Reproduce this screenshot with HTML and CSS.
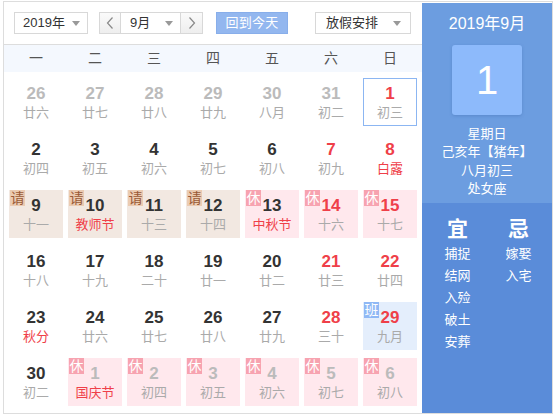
FILE: index.html
```html
<!DOCTYPE html>
<html lang="zh-CN">
<head>
<meta charset="utf-8">
<title>万年历</title>
<link rel="stylesheet" href="styles.css">
</head>
<body>
<div class="cal">
  <div class="main">
    <div class="toolbar">
      <div class="sel sel-year"><span>2019年</span><i class="caret"></i></div>
      <div class="month-ctl">
        <div class="nav"><svg width="8" height="12" viewBox="0 0 8 12"><polyline points="6.5,0.5 1.5,6 6.5,11.5" fill="none" stroke="#888" stroke-width="1.2"/></svg></div>
        <div class="sel sel-month"><span>9月</span><i class="caret"></i></div>
        <div class="nav"><svg width="8" height="12" viewBox="0 0 8 12"><polyline points="1.5,0.5 6.5,6 1.5,11.5" fill="none" stroke="#888" stroke-width="1.2"/></svg></div>
      </div>
      <div class="btn-today">回到今天</div>
      <div class="sel sel-holiday"><span>放假安排</span><i class="caret"></i></div>
    </div>
    <div class="week">
      <span>一</span><span>二</span><span>三</span><span>四</span><span>五</span><span>六</span><span>日</span>
    </div>
    <div class="grid">
      <div class="day other"><b>26</b><em>廿六</em></div>
      <div class="day other"><b>27</b><em>廿七</em></div>
      <div class="day other"><b>28</b><em>廿八</em></div>
      <div class="day other"><b>29</b><em>廿九</em></div>
      <div class="day other"><b>30</b><em>八月</em></div>
      <div class="day other"><b>31</b><em>初二</em></div>
      <div class="day red selected"><b>1</b><em>初三</em></div>

      <div class="day"><b>2</b><em>初四</em></div>
      <div class="day"><b>3</b><em>初五</em></div>
      <div class="day"><b>4</b><em>初六</em></div>
      <div class="day"><b>5</b><em>初七</em></div>
      <div class="day"><b>6</b><em>初八</em></div>
      <div class="day red"><b>7</b><em>初九</em></div>
      <div class="day red"><b>8</b><em class="fest">白露</em></div>

      <div class="day leave"><i class="tag">请</i><b>9</b><em>十一</em></div>
      <div class="day leave"><i class="tag">请</i><b>10</b><em class="fest">教师节</em></div>
      <div class="day leave"><i class="tag">请</i><b>11</b><em>十三</em></div>
      <div class="day leave"><i class="tag">请</i><b>12</b><em>十四</em></div>
      <div class="day rest"><i class="tag">休</i><b>13</b><em class="fest">中秋节</em></div>
      <div class="day rest red"><i class="tag">休</i><b>14</b><em>十六</em></div>
      <div class="day rest red"><i class="tag">休</i><b>15</b><em>十七</em></div>

      <div class="day"><b>16</b><em>十八</em></div>
      <div class="day"><b>17</b><em>十九</em></div>
      <div class="day"><b>18</b><em>二十</em></div>
      <div class="day"><b>19</b><em>廿一</em></div>
      <div class="day"><b>20</b><em>廿二</em></div>
      <div class="day red"><b>21</b><em>廿三</em></div>
      <div class="day red"><b>22</b><em>廿四</em></div>

      <div class="day"><b>23</b><em class="fest">秋分</em></div>
      <div class="day"><b>24</b><em>廿六</em></div>
      <div class="day"><b>25</b><em>廿七</em></div>
      <div class="day"><b>26</b><em>廿八</em></div>
      <div class="day"><b>27</b><em>廿九</em></div>
      <div class="day red"><b>28</b><em>三十</em></div>
      <div class="day work red"><i class="tag">班</i><b>29</b><em>九月</em></div>

      <div class="day"><b>30</b><em>初二</em></div>
      <div class="day rest other"><i class="tag">休</i><b>1</b><em class="fest">国庆节</em></div>
      <div class="day rest other"><i class="tag">休</i><b>2</b><em>初四</em></div>
      <div class="day rest other"><i class="tag">休</i><b>3</b><em>初五</em></div>
      <div class="day rest other"><i class="tag">休</i><b>4</b><em>初六</em></div>
      <div class="day rest other"><i class="tag">休</i><b>5</b><em>初七</em></div>
      <div class="day rest other"><i class="tag">休</i><b>6</b><em>初八</em></div>
    </div>
  </div>
  <div class="side">
    <div class="side-top">
      <div class="side-title">2019年9月</div>
      <div class="big-day">1</div>
      <div class="info">
        <p>星期日</p>
        <p>己亥年【猪年】</p>
        <p>八月初三</p>
        <p>处女座</p>
      </div>
    </div>
    <div class="side-bottom">
      <div class="yj">
        <div class="yj-head">宜</div>
        <p>捕捉</p><p>结网</p><p>入殓</p><p>破土</p><p>安葬</p>
      </div>
      <div class="yj">
        <div class="yj-head">忌</div>
        <p>嫁娶</p><p>入宅</p>
      </div>
    </div>
  </div>
</div>
</body>
</html>
```

FILE: styles.css
```css
* { box-sizing: border-box; }
html, body { margin: 0; padding: 0; background: #fff; }
body {
  font-family: "Liberation Sans", "Noto Sans CJK SC", sans-serif;
  color: #333;
}
p { margin: 0; }
.cal {
  margin: 1px 0 0 3px;
  width: 550px;
  height: 413px;
  border: 1px solid #ddd;
  display: flex;
}
.main { width: 418px; display: flex; flex-direction: column; }
.toolbar {
  height: 43px;
  border-bottom: 1px solid #ddd;
  display: flex;
  align-items: flex-start;
  padding: 10px 11px 0 10px;
  font-size: 13px;
}
.sel {
  height: 22px;
  border: 1px solid #d8d8d8;
  background: #fff;
  position: relative;
  line-height: 20px;
  color: #333;
}
.sel span { display: block; padding-left: 8px; }
.caret {
  position: absolute;
  top: 8px;
  right: 7px;
  width: 0; height: 0;
  border-left: 4px solid transparent;
  border-right: 4px solid transparent;
  border-top: 5px solid #999;
}
.sel-year { width: 74px; }
.month-ctl { display: flex; margin-left: 11px; }
.nav {
  width: 22px; height: 22px;
  border: 1px solid #d8d8d8;
  background: linear-gradient(#fafafa, #eeeeee);
  display: flex; align-items: center; justify-content: center;
}
.month-ctl .nav:last-child { width: 23px; }
.sel-month { width: 59px; border-left: none; border-right: none; }
.sel-month span { padding-left: 9px; }
.btn-today {
  margin-left: 13px;
  width: 72px; height: 22px;
  background: #93b7ef;
  border: 1px solid #88aeea;
  color: #fff;
  text-align: center;
  line-height: 20px;
  letter-spacing: 0.3px;
}
.sel-holiday { width: 96px; margin-left: auto; }
.sel-holiday span { padding-left: 10px; }
.sel-holiday .caret { right: 9px; }

.week {
  height: 27px;
  background: #f4f8fe;
  display: grid;
  grid-template-columns: repeat(7, 54px);
  column-gap: 5px;
  padding: 0 5px;
  font-size: 14px;
  line-height: 27px;
  text-align: center;
  color: #555;
}
.grid {
  display: grid;
  grid-template-columns: repeat(7, 54px);
  grid-auto-rows: 48px;
  gap: 8px 5px;
  padding: 6px 5px 0 5px;
}
.day {
  position: relative;
  text-align: center;
  padding-top: 5px;
  border: 1px solid transparent;
}
.day b {
  display: block;
  font-size: 17px;
  font-weight: bold;
  line-height: 20px;
  color: #333;
  font-family: "Liberation Sans", Arial, sans-serif;
}
.day em {
  display: block;
  font-style: normal;
  font-size: 13px;
  line-height: 18px;
  color: #aaa;
}
.day.red b { color: #ef3f49; }
.day.other b { color: #bbb; }
.day em.fest { color: #ef3f49; }
.day.selected { border-color: #8cb6f2; }
.day.leave { background: #f2e8e1; }
.day.rest { background: #ffe8ed; }
.day.work { background: #e4eefc; }
.tag {
  position: absolute;
  top: -1px;
  left: 0;
  width: 15px;
  height: 16px;
  font-style: normal;
  font-size: 14px;
  line-height: 16px;
  text-align: center;
  overflow: hidden;
}
.leave .tag { background: #ebcbb2; color: #9a5a36; }
.rest .tag { background: #f7a3b0; color: #fff; }
.work .tag { background: #8fb8f5; color: #fff; }

.side { width: 130px; margin-top: 1px; color: #fff; display: flex; flex-direction: column; }
.side-top { height: 200px; background: #6c9de0; text-align: center; }
.side-title { font-size: 16px; line-height: 20px; padding-top: 11px; }
.big-day {
  width: 70px; height: 70px;
  margin: 11px auto 0;
  background: #8dbafb;
  border-radius: 3px;
  box-shadow: 0 1px 3px rgba(60, 100, 170, 0.35);
  font-size: 40px;
  line-height: 70px;
}
.info { margin-top: 10px; font-size: 13px; line-height: 18.3px; }
.side-bottom {
  flex: 1;
  background: #5a8cd9;
  display: flex;
  padding: 14px 0 0 5px;
}
.yj { width: 61px; text-align: center; font-size: 13px; }
.yj-head { font-size: 21px; font-weight: bold; line-height: 24px; margin-bottom: 2px; }
.yj p { line-height: 22px; }
```
